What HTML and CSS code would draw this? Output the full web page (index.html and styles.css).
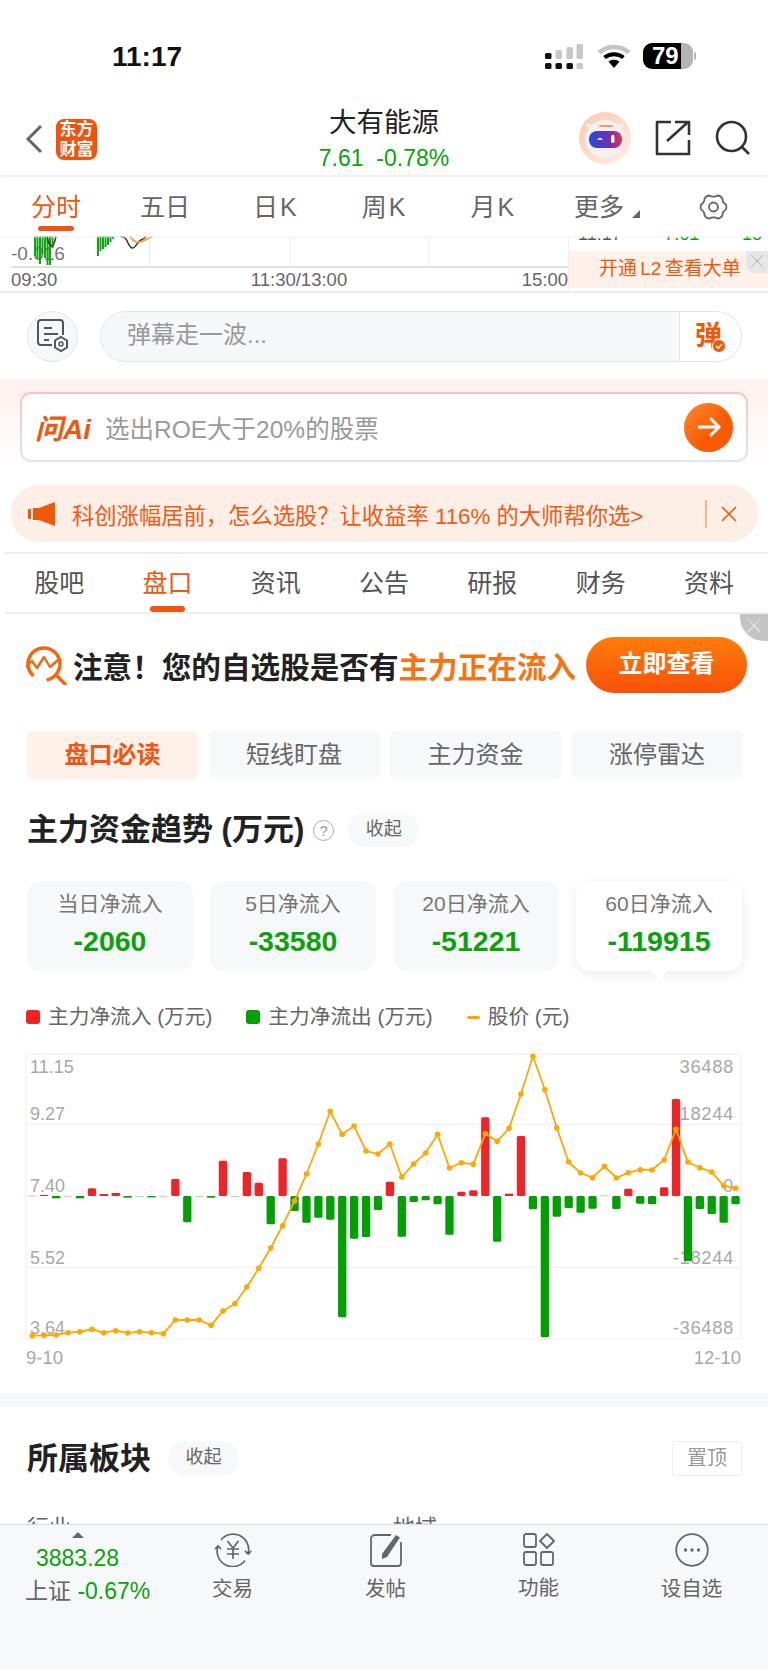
FILE: index.html
```html
<!DOCTYPE html>
<html lang="zh-CN">
<head>
  <meta charset="UTF-8" />
  <title>大有能源</title>
  <link rel="stylesheet" href="styles.css">
</head>
<body>
<div class="page">
  <div class="main">

    <div class="status">
      <span class="clock">11:17</span>
      <div class="status-icons">
        <svg class="signal" width="38" height="25" viewBox="0 0 38 25">
          <rect x="0" y="9" width="6.500" height="6" rx="1.500" fill="#111"/>
          <rect x="10.500" y="6" width="6.500" height="9" rx="1.500" fill="#c8c8c8"/>
          <rect x="21.500" y="3" width="6.500" height="12" rx="1.500" fill="#c8c8c8"/>
          <rect x="31.500" y="0" width="6.500" height="15" rx="1.500" fill="#c8c8c8"/>
          <rect x="0" y="19" width="6.500" height="6" rx="1.500" fill="#111"/>
          <rect x="10.500" y="19" width="6.500" height="6" rx="1.500" fill="#111"/>
          <rect x="21.500" y="19" width="6.500" height="6" rx="1.500" fill="#111"/>
          <rect x="31.500" y="19" width="6.500" height="6" rx="1.500" fill="#c8c8c8"/>
        </svg>
        <svg class="wifi" width="34" height="25" viewBox="0 0 34 25">
          <path d="M2 8.500C10.500 1 23.500 1 32 8.500" fill="none" stroke="#c4c4c4" stroke-width="4.500"/>
          <path d="M7.500 13.500C13 9 21 9 26.500 13.500" fill="none" stroke="#000" stroke-width="4"/>
          <path d="M11.500 17.500C15 15 19 15 22.500 17.500L17 24Z" fill="#000"/>
        </svg>
        <div class="battery"><span>79</span></div>
        <i class="battery-nub"></i>
      </div>
    </div>

    <div class="head">
      <div class="head-left">
        <svg width="18" height="30" viewBox="0 0 18 30"><path d="M16 2L3 15l13 13" fill="none" stroke="#666" stroke-width="3"/></svg>
        <div class="logo">东方<br>财富</div>
      </div>
      <div class="head-title">
        <div class="name">大有能源</div>
        <div class="quote">7.61&nbsp;&nbsp;-0.78%</div>
      </div>
      <div class="head-right">
        <svg width="52" height="52" viewBox="0 0 52 52">
          <defs>
            <linearGradient id="peach" x1="0" y1="0" x2="1" y2="1"><stop offset="0" stop-color="#fdc9ae"/><stop offset="1" stop-color="#fdeee6"/></linearGradient>
            <linearGradient id="visor" x1="0" y1="0" x2="1" y2="0"><stop offset="0" stop-color="#2a4ad8"/><stop offset="0.6" stop-color="#6a2fb5"/><stop offset="1" stop-color="#e8304a"/></linearGradient>
          </defs>
          <circle cx="26" cy="26" r="26" fill="url(#peach)"/>
          <path d="M9 13l6 5M43 13l-6 5" stroke="#f4f0ec" stroke-width="4" stroke-linecap="round"/>
          <ellipse cx="26" cy="27" rx="20" ry="19" fill="#f3f1ef"/>
          <rect x="20" y="13" width="14" height="2" rx="1" fill="#f39a5c"/>
          <rect x="10" y="19" width="33" height="17" rx="8" fill="url(#visor)"/>
          <path d="M19 28c1-2 3-2 4 0" fill="none" stroke="#fff" stroke-width="1.500"/>
          <rect x="32" y="23" width="3.500" height="8" rx="1.700" fill="#fff"/>
        </svg>
        <svg width="36" height="36" viewBox="0 0 36 36"><path d="M16 2H2v32h32V20M12 21L32 3M20 2h14v13" fill="none" stroke="#333" stroke-width="2.600" stroke-linejoin="round"/></svg>
        <svg width="36" height="36" viewBox="0 0 36 36"><circle cx="16.500" cy="16.500" r="14.500" fill="none" stroke="#333" stroke-width="2.600"/><path d="M27 27l7 7" stroke="#333" stroke-width="2.600"/></svg>
      </div>
    </div>

    <div class="periods">
      <span class="period period-on">分时</span>
      <span class="period">五日</span>
      <span class="period period-k">日K</span>
      <span class="period period-k">周K</span>
      <span class="period period-k">月K</span>
      <span class="period more">更多<i class="more-mark"></i></span>
      <svg class="gear" width="29" height="28" viewBox="0 0 29 28">
        <path d="M10.500 2.500c1.500 1.500 6.500 1.500 8 0 1.500 0 4 1.500 5 3-.5 2 1.500 5.500 3.500 6 .5 1.500.5 3.500 0 5-2 .5-4 4-3.500 6-1 1.500-3.500 3-5 3-1.500-1.500-6.500-1.500-8 0-1.500 0-4-1.500-5-3 .5-2-1.500-5.500-3.500-6-.5-1.500-.5-3.500 0-5 2-.5 4-4 3.500-6 1-1.500 3.500-3 5-3z" fill="none" stroke="#666" stroke-width="1.800" stroke-linejoin="round"/>
        <circle cx="14.500" cy="14" r="4.500" fill="none" stroke="#666" stroke-width="1.800"/>
      </svg>
    </div>

    <div class="mini">
      <div class="mini-chart">
        <svg width="557" height="32" viewBox="0 0 557 32">
          <path d="M138.500 0V31M279 0V31M418 0V31" stroke="#e8eaef" stroke-width="1"/>
          <text x="0" y="24" class="mini-label">-0.016</text>
          <path d="M24 0V20M26.500 0V23M29 0V28M31.500 0V18M34 0V22M36.500 0V29M39 0V29M41.500 0V12" stroke="#12a512" stroke-width="2"/>
          <path d="M87 0V20M89.500 0V15M92 0V13M94.500 0V11M97 0V9M99.500 0V6M102 0V3" stroke="#12a512" stroke-width="2"/>
          <path d="M36 0c1 6 3 10 5 10s3-5 4-10" fill="none" stroke="#333" stroke-width="1.500"/>
          <path d="M109 0c3 2 4 0 6 3s3 8 6 9 5-6 9-8 4-2 5-4" fill="none" stroke="#333" stroke-width="1.500"/>
          <path d="M119 0c2 4 6 7 10 6s7-3 13-6" fill="none" stroke="#f5a32a" stroke-width="1.800"/>
          <path d="M0 31H557" stroke="#dfe1e6" stroke-width="2"/>
        </svg>
        <div class="mini-times"><span>09:30</span><span class="mini-noon">11:30/13:00</span><span>15:00</span></div>
      </div>
      <div class="mini-side">
        <div class="mini-tick"><span>11:17</span><span class="up">7.61</span><span class="up">15</span></div>
        <div class="mini-l2">开通 L2 查看大单<span class="l2-close">╳</span></div>
      </div>
    </div>

    <div class="danmu">
      <div class="danmu-btn">
        <svg width="33" height="37" viewBox="0 0 33 37">
          <path d="M16 27H5a3 3 0 0 1-3-3V5a3 3 0 0 1 3-3h19a3 3 0 0 1 3 3v12M8 10h8M8 16h14M8 22h5" fill="none" stroke="#555" stroke-width="2"/>
          <path d="M25 19l6 3.500v7L25 33l-6-3.500v-7z" fill="#f7f8fa" stroke="#555" stroke-width="2"/>
          <circle cx="25" cy="26" r="2" fill="none" stroke="#555" stroke-width="1.500"/>
        </svg>
      </div>
      <div class="danmu-box">
        <span class="danmu-hint">弹幕走一波...</span>
        <span class="danmu-send">弹
          <svg class="danmu-check" width="14" height="14" viewBox="0 0 14 14"><circle cx="7" cy="7" r="6.500" fill="#ee5a0a" stroke="#fff"/><path d="M4 7l2.200 2.200L10 5" fill="none" stroke="#fff" stroke-width="1.400"/></svg>
        </span>
      </div>
    </div>

    <div class="ask-wrap">
      <div class="ask">
        <span class="ask-logo">问Ai</span>
        <span class="ask-text">选出ROE大于20%的股票</span>
        <span class="ask-go">
          <svg width="26" height="24" viewBox="0 0 26 24"><path d="M2 12h21M14 3l9 9-9 9" fill="none" stroke="#fff" stroke-width="3"/></svg>
        </span>
      </div>
      <div class="notice">
        <svg width="28" height="24" viewBox="0 0 28 24"><path d="M0 7h3v10H0zM5 6h6L27 0v24L11 18H5z" fill="#ee5a0a"/></svg>
        <span class="notice-text">科创涨幅居前，怎么选股？让收益率 116% 的大师帮你选&gt;</span>
        <svg class="notice-x" width="32" height="28" viewBox="0 0 32 28"><path d="M1 0V28" stroke="#ee7a3a" stroke-width="1"/><path d="M17 7l14 14M31 7L17 21" stroke="#ee5a0a" stroke-width="1.600"/></svg>
      </div>
    </div>

    <div class="tabs">
      <span class="tab">股吧</span>
      <span class="tab tab-on">盘口</span>
      <span class="tab">资讯</span>
      <span class="tab">公告</span>
      <span class="tab">研报</span>
      <span class="tab">财务</span>
      <span class="tab">资料</span>
    </div>

    <div class="panel">
      <span class="ad-close">╳</span>
      <div class="ad">
        <svg width="43" height="39" viewBox="0 0 43 39">
          <circle cx="20" cy="18" r="16" fill="none" stroke="#f5660f" stroke-width="3.500" stroke-dasharray="78 14" transform="rotate(160 20 18)"/>
          <path d="M32 29l9 9" stroke="#f5660f" stroke-width="3.500" stroke-linecap="round"/>
          <path d="M2 21l6-6 5 7 7-11 6 10 8-7" fill="none" stroke="#f5660f" stroke-width="2.400" stroke-linejoin="round"/>
        </svg>
        <span class="ad-text">注意！您的自选股是否有<em>主力正在流入</em></span>
        <span class="ad-btn">立即查看</span>
      </div>

      <div class="segs">
        <span class="seg seg-on">盘口必读</span>
        <span class="seg">短线盯盘</span>
        <span class="seg">主力资金</span>
        <span class="seg">涨停雷达</span>
      </div>

      <div class="title-row">
        <h2 class="title">主力资金趋势 (万元)</h2>
        <span class="help">?</span>
        <span class="fold">收起</span>
      </div>

      <div class="cards">
        <div class="card"><div class="card-label">当日净流入</div><div class="card-num">-2060</div></div>
        <div class="card"><div class="card-label">5日净流入</div><div class="card-num">-33580</div></div>
        <div class="card"><div class="card-label">20日净流入</div><div class="card-num">-51221</div></div>
        <div class="card card-on"><div class="card-label">60日净流入</div><div class="card-num">-119915</div></div>
      </div>

      <div class="legend">
        <span class="legend-item"><i class="dot dot-red"></i>主力净流入 (万元)</span>
        <span class="legend-item"><i class="dot dot-green"></i>主力净流出 (万元)</span>
        <span class="legend-item"><i class="dash"></i>股价 (元)</span>
      </div>

      <svg id="flow" class="flow" width="768" height="330" viewBox="0 0 768 330"></svg>
    </div>

    <div class="sector">
      <div class="sector-head">
        <h2 class="title">所属板块</h2>
        <span class="fold">收起</span>
        <span class="pin">置顶</span>
      </div>
      <div class="sector-cols"><span>行业</span><span>地域</span></div>
    </div>
  </div>

  <div class="bar">
    <div class="bar-index">
      <i class="bar-arrow"></i>
      <div class="bar-price">3883.28</div>
      <div class="bar-rate">上证 <b>-0.67%</b></div>
    </div>
    <div class="bar-item">
      <svg width="38" height="34" viewBox="0 0 38 34">
        <path d="M7 7A15.500 15.500 0 0 1 34.300 20M31 18l3.300 3 3-3M31 27.500A15.500 15.500 0 0 1 3.700 14M1 16l3-3 3 3" fill="none" stroke="#666" stroke-width="1.700"/>
        <path d="M13.500 8l5.500 7 5.500-7M13 16h12M13 21h12M19 15v11" fill="none" stroke="#666" stroke-width="1.700"/>
      </svg>
      <span>交易</span>
    </div>
    <div class="bar-item">
      <svg width="34" height="34" viewBox="0 0 34 34">
        <path d="M22 2H6a4 4 0 0 0-4 4v24a3 3 0 0 0 3 3h24a3 3 0 0 0 3-3V9" fill="none" stroke="#666" stroke-width="1.800"/>
        <path d="M13 21L27 2l4 2.500L18 24l-5 2z" fill="#666"/>
      </svg>
      <span>发帖</span>
    </div>
    <div class="bar-item">
      <svg width="32" height="33" viewBox="0 0 32 33">
        <rect x="1" y="1" width="12" height="13" rx="2" fill="none" stroke="#666" stroke-width="1.800"/>
        <path d="M24 1l7 7-7 7-7-7z" fill="none" stroke="#666" stroke-width="1.800" stroke-linejoin="round"/>
        <rect x="1" y="19" width="12" height="13" rx="2" fill="none" stroke="#666" stroke-width="1.800"/>
        <rect x="18" y="19" width="12" height="13" rx="2" fill="none" stroke="#666" stroke-width="1.800"/>
      </svg>
      <span>功能</span>
    </div>
    <div class="bar-item">
      <svg width="34" height="34" viewBox="0 0 34 34">
        <circle cx="17" cy="17" r="15.800" fill="none" stroke="#666" stroke-width="1.800"/>
        <circle cx="10.500" cy="17" r="1.700" fill="#666"/><circle cx="17" cy="17" r="1.700" fill="#666"/><circle cx="23.500" cy="17" r="1.700" fill="#666"/>
      </svg>
      <span>设自选</span>
    </div>
  </div>
</div>
<script src="chart.js"></script>
</body>
</html>
```

FILE: styles.css
```css
* {
  box-sizing: border-box;
}
body {
  margin: 0;
  background: #fff;
  font-family: "Liberation Sans", "Noto Sans CJK SC", sans-serif;
  color: #333;
}
i {
  display: block;
}
.page {
  width: 768px;
  height: 1669px;
  display: flex;
  flex-direction: column;
  overflow: hidden;
}
.main {
  flex: 1;
  min-height: 0;
  overflow: hidden;
}

/* status bar */
.status {
  height: 100px;
  padding: 41px 72px 0 112px;
  display: flex;
  justify-content: space-between;
  align-items: flex-start;
}
.clock {
  font-size: 28px;
  line-height: 32px;
  font-weight: 700;
  color: #111;
}
.status-icons {
  display: flex;
  align-items: center;
  margin-top: 2px;
}
.wifi {
  margin-left: 14px;
}
.battery {
  margin-left: 12px;
  width: 50px;
  height: 26px;
  border-radius: 9px;
  background: linear-gradient(90deg, #000 76%, #b4b4b4 76%);
  color: #fff;
  font-size: 24px;
  line-height: 26px;
  font-weight: 700;
  padding-left: 9px;
}
.battery-nub {
  width: 2px;
  height: 8px;
  margin-left: 1px;
  background: #b4b4b4;
  border-radius: 0 2px 2px 0;
}

/* stock header */
.head {
  height: 77px;
  display: grid;
  grid-template-columns: 1fr auto 1fr;
  align-items: center;
  border-bottom: 2px solid #f0f0f0;
}
.head-left {
  display: flex;
  align-items: center;
  padding-left: 25px;
  gap: 13px;
  padding-top: 3px;
}
.logo {
  width: 41px;
  height: 41px;
  border-radius: 8px;
  background: #f4520a;
  color: #fff;
  font-size: 17px;
  line-height: 20px;
  font-weight: 700;
  text-align: center;
  padding-top: 1px;
}
.head-title {
  text-align: center;
  margin-top: 3px;
}
.name {
  font-size: 27.500px;
  line-height: 38px;
  color: #222;
}
.quote {
  font-size: 23px;
  line-height: 32px;
  color: #0aa30a;
}
.head-right {
  display: flex;
  justify-content: flex-end;
  align-items: center;
  padding-right: 17px;
  gap: 24px;
}

/* chart period tabs */
.periods {
  height: 59px;
  display: flex;
  align-items: center;
  padding-left: 31px;
  gap: 59px;
  box-shadow: 0 1px 2px #f2f2f2;
  position: relative;
}
.period {
  font-size: 25px;
  color: #666;
  line-height: 58px;
  position: relative;
}
.period-k {
  letter-spacing: 2px;
  margin-left: 4px;
}
.period-on {
  color: #f0560f;
}
.period-on::after {
  content: "";
  position: absolute;
  left: 7px;
  right: 7px;
  bottom: 5px;
  height: 5px;
  border-radius: 3px;
  background: #f0560f;
}
.more {
  display: flex;
  margin-left: -1px;
}
.more-mark {
  align-self: center;
  margin: 14px 0 0 8px;
  border-left: 8px solid transparent;
  border-bottom: 8px solid #666;
}
.gear {
  margin-left: 0;
}

/* cropped intraday chart */
.mini {
  height: 57px;
  display: flex;
  border-bottom: 2px solid #eceef1;
}
.mini-chart {
  width: 568px;
  padding-left: 11px;
}
.mini-chart svg {
  display: block;
}
.mini-label {
  font-size: 19px;
  fill: #777;
}
.mini-times {
  display: flex;
  justify-content: space-between;
  font-size: 18.500px;
  line-height: 23px;
  color: #666;
}
.mini-noon {
  margin-left: 19px;
}
.mini-side {
  flex: 1;
  border-left: 1px solid #eceef1;
}
.mini-tick {
  height: 15px;
  overflow: hidden;
  display: flex;
  justify-content: space-between;
  padding: 0 6px 0 9px;
  font-size: 18px;
  line-height: 0;
  color: #555;
}
.mini-tick span {
  margin-top: -2px;
}
.up {
  color: #0aa30a;
}
.mini-l2 {
  height: 37px;
  background: #fdf1ea;
  color: #f0580f;
  font-size: 19px;
  line-height: 36px;
  padding-left: 30px;
  word-spacing: -2px;
  position: relative;
}
.l2-close {
  position: absolute;
  right: 0;
  top: 0;
  width: 22px;
  height: 22px;
  background: #e7e7e7;
  border-radius: 0 0 0 8px;
  color: #888;
  font-size: 12px;
  line-height: 22px;
  text-align: center;
}

/* comment input */
.danmu {
  height: 86px;
  display: flex;
  align-items: center;
  padding-left: 27px;
  gap: 22px;
}
.danmu-btn {
  width: 51px;
  height: 51px;
  border-radius: 50%;
  border: 1px solid #e2e4e8;
  background: #f7f8fa;
  display: flex;
  align-items: center;
  justify-content: center;
}
.danmu-box {
  width: 642px;
  height: 51px;
  border: 1px solid #e2e4e8;
  border-radius: 26px;
  background: linear-gradient(90deg, #f6f7f9 579px, #fff 579px);
  display: flex;
  align-items: center;
  justify-content: space-between;
  overflow: hidden;
}
.danmu-hint {
  padding: 0 0 7px 26px;
  font-size: 24px;
  color: #999;
}
.danmu-send {
  width: 62px;
  height: 100%;
  border-left: 1px solid #e2e4e8;
  color: #ee5a0a;
  font-size: 27px;
  line-height: 49px;
  font-weight: 700;
  padding-left: 15px;
  position: relative;
}
.danmu-check {
  position: absolute;
  left: 32px;
  top: 27px;
}

/* AI prompt and notice */
.ask-wrap {
  padding: 13px 10px 10px 11px;
  background: linear-gradient(#fff1ee, #fff 90px);
}
.ask {
  margin: 0 10px 0 9px;
  height: 70px;
  border-radius: 11px;
  border: 2px solid transparent;
  background: linear-gradient(#fff, #fff) padding-box, linear-gradient(#fdc4ba, #dfe4f6) border-box;
  display: flex;
  align-items: center;
  padding-left: 13px;
}
.ask-logo {
  width: 70px;
  color: #f0560f;
  font-size: 28px;
  font-weight: 700;
  font-style: italic;
}
.ask-text {
  flex: 1;
  font-size: 24.500px;
  color: #999;
}
.ask-go {
  width: 49px;
  height: 49px;
  margin-right: 13px;
  border-radius: 50%;
  background: linear-gradient(135deg, #ff8a2a, #fb5a05 60%);
  display: flex;
  align-items: center;
  justify-content: center;
}
.notice {
  margin-top: 23px;
  height: 57px;
  border-radius: 28px;
  background: #fdeee6;
  display: flex;
  align-items: center;
  padding: 0 21px 0 17px;
}
.notice-text {
  flex: 1;
  padding-left: 16px;
  font-size: 22.300px;
  color: #ee5a17;
  white-space: nowrap;
}

/* section tabs */
.tabs {
  height: 62px;
  margin-left: 5px;
  display: grid;
  grid-template-columns: repeat(7, 108.300px);
  border-top: 2px solid #eeeeee;
  border-bottom: 2px solid #eeeeee;
}
.tab {
  text-align: center;
  font-size: 25px;
  line-height: 58px;
  color: #555;
  position: relative;
}
.tab-on {
  color: #f0560f;
}
.tab-on::after {
  content: "";
  position: absolute;
  left: 37px;
  width: 35px;
  bottom: 0;
  height: 6px;
  border-radius: 3px;
  background: #f0560f;
}

/* capital flow panel */
.panel {
  position: relative;
  padding-top: 23px;
}
.ad-close {
  position: absolute;
  right: 0;
  top: 0;
  width: 28px;
  height: 27px;
  border-radius: 0 0 0 24px;
  background: #c4c4c4;
  color: #fff;
  font-size: 13px;
  line-height: 24px;
  text-align: center;
}
.ad {
  height: 56px;
  display: flex;
  align-items: center;
  padding: 0 21px 0 24px;
}
.ad-text {
  flex: 1;
  padding-left: 6px;
  font-size: 29.600px;
  font-weight: 700;
  color: #222;
  white-space: nowrap;
}
.ad-text em {
  font-style: normal;
  color: #f8720f;
}
.ad-btn {
  flex: none;
  width: 161px;
  height: 56px;
  border-radius: 28px;
  background: linear-gradient(#ff7d08, #f9500a);
  color: #fff;
  font-size: 24px;
  line-height: 54px;
  font-weight: 700;
  text-align: center;
}
.segs {
  margin-top: 38px;
  padding: 0 26px 0 27px;
  display: grid;
  grid-template-columns: repeat(4, 171px);
  gap: 10.500px;
}
.seg {
  height: 48px;
  border-radius: 6px;
  background: #f7f8fa;
  color: #666;
  font-size: 24px;
  line-height: 47px;
  text-align: center;
}
.seg-on {
  background: #fff0e8;
  color: #f0560f;
  font-weight: 700;
}
.title-row {
  margin-top: 34px;
  padding-left: 27px;
  height: 34px;
  display: flex;
  align-items: center;
}
.title {
  margin: 0;
  font-size: 31px;
  font-weight: 700;
  color: #222;
  line-height: 34px;
}
.help {
  margin-left: 9px;
  width: 21px;
  height: 21px;
  border: 1px solid #aaa;
  border-radius: 50%;
  color: #999;
  font-size: 15px;
  line-height: 19px;
  text-align: center;
}
.fold {
  margin-left: 14px;
  width: 71px;
  height: 34px;
  border-radius: 17px;
  background: #f7f8fa;
  color: #666;
  font-size: 18px;
  line-height: 33px;
  text-align: center;
}
.cards {
  margin-top: 34px;
  padding-left: 27px;
  display: grid;
  grid-template-columns: repeat(4, 166px);
  gap: 17px;
}
.card {
  height: 90px;
  border-radius: 14px;
  background: #f7f8fa;
  text-align: center;
  padding-top: 8px;
  position: relative;
}
.card-label {
  font-size: 21px;
  line-height: 30px;
  color: #777;
}
.card-num {
  margin-top: 6px;
  font-size: 28.500px;
  line-height: 32px;
  font-weight: 700;
  color: #0aa30a;
}
.card-on {
  background: #fff;
  box-shadow: 0 3px 12px rgba(0, 0, 0, 0.08);
}
.card-on::after {
  content: "";
  position: absolute;
  left: 75px;
  bottom: -8px;
  border-left: 8px solid transparent;
  border-right: 8px solid transparent;
  border-top: 8px solid #fff;
}
.legend {
  margin-top: 36px;
  padding-left: 26px;
  height: 20px;
  display: flex;
  gap: 34px;
  font-size: 20.700px;
  line-height: 20px;
  color: #666;
}
.legend-item {
  display: flex;
  align-items: center;
}
.dot {
  width: 14px;
  height: 14px;
  border-radius: 3px;
  margin-right: 8px;
}
.dot-red {
  background: #f52225;
}
.dot-green {
  background: #00a000;
}
.dash {
  width: 13px;
  height: 3px;
  border-radius: 2px;
  background: #ffa800;
  margin-right: 8px;
}
.flow {
  display: block;
  margin-top: 13px;
}
.flow text {
  font-size: 18.500px;
  fill: #a8a8a8;
}
.flow .axis-l {
  font-size: 18px;
}
.flow .axis-r {
  letter-spacing: 0.600px;
}

/* sector block, cut off by the bottom bar */
.sector {
  margin-top: 23px;
  border-top: 14px solid #f7f8fa;
  padding: 34px 26px 0 27px;
}
.sector-head {
  height: 35px;
  display: flex;
  align-items: center;
}
.sector-head .fold {
  margin-left: 17px;
  height: 35px;
}
.pin {
  margin-left: auto;
  width: 70px;
  height: 35px;
  border: 1px solid #eeeeee;
  border-radius: 3px;
  color: #999;
  font-size: 20px;
  line-height: 33px;
  text-align: center;
}
.sector-cols {
  margin-top: 33px;
  display: grid;
  grid-template-columns: 366px 1fr;
  font-size: 22px;
  color: #666;
}

/* bottom bar */
.bar {
  height: 145px;
  border-top: 1px solid #dddddd;
  background: #f7f8fa;
  display: flex;
  align-items: flex-start;
  padding-top: 8px;
}
.bar-index {
  width: 156px;
  padding-left: 25px;
  position: relative;
  flex: none;
}
.bar-arrow {
  position: absolute;
  left: 72px;
  top: -1px;
  border-left: 6px solid transparent;
  border-right: 6px solid transparent;
  border-bottom: 6px solid #666;
}
.bar-price {
  margin-top: 12px;
  padding-left: 11px;
  font-size: 23px;
  line-height: 26px;
  color: #0aa30a;
}
.bar-rate {
  margin-top: 5px;
  font-size: 23px;
  line-height: 30px;
  color: #666;
  white-space: nowrap;
}
.bar-rate b {
  font-weight: 400;
  color: #0aa30a;
}
.bar-item {
  width: 153px;
  flex: none;
  text-align: center;
  font-size: 20.500px;
  line-height: 28px;
  color: #666;
}
.bar-item svg {
  display: block;
  margin: 0 auto 8px;
}
```

FILE: chart.js
```js
// 60 day capital flow: bars around the zero line plus the price line.
// Values are pixel rows inside the plot, three to the unit.
var price = [887,886,885,878,875,868,878,872,879,875,878,881,840,840,840,856,813,791,741,685,
  624,557,483,402,312,214,283,258,333,342,312,411,372,339,283,384,368,373,281,304,
  265,162,49,149,264,366,399,413,379,414,398,389,390,360,268,366,383,396,437,445];
var flow = [467,465,475,467,475,445,462,459,473,469,472,467,417,547,469,473,362,469,396,428,
  553,355,513,548,533,539,832,596,591,510,425,590,486,481,493,584,455,451,232,605,
  461,288,508,892,530,504,518,506,466,507,446,491,493,442,177,663,507,522,548,493];
var ZERO = 468;
var svg = document.getElementById("flow");
var html = "";

function posX(i) {
  return 32.3 + 11.92 * i;
}

// frame and grid lines
html += '<path d="M26 14H741M26 84.300H741M26 227.300H741M26 299H741M26 14V299M741 14V299" stroke="#efefef" stroke-width="1" fill="none"/>';

// left axis is price, right axis is money
var left = [["11.15", 33], ["9.27", 80], ["7.40", 152], ["5.52", 224], ["3.64", 294]];
var right = [["36488", 33], ["18244", 80], ["0", 152], ["-18244", 224], ["-36488", 294]];
left.forEach(function (t) {
  html += '<text class="axis-l" x="30" y="' + t[1] + '">' + t[0] + "</text>";
});
right.forEach(function (t) {
  html += '<text class="axis-r" x="734" y="' + t[1] + '" text-anchor="end">' + t[0] + "</text>";
});
html += '<text x="26" y="324">9-10</text>';
html += '<text x="741" y="324" text-anchor="end">12-10</text>';

flow.forEach(function (v, i) {
  var isUp = v < ZERO;
  var top = isUp ? v / 3 : ZERO / 3;
  var h = Math.abs(v - ZERO) / 3;
  var color = isUp ? "#f52225" : "#00a000";
  var pale = h < 1;
  if (pale) {
    h = 1;
  }
  html += '<rect x="' + (posX(i) - 4.15) + '" y="' + top + '" width="8.3" height="' + h + '" rx="' + (h > 3 ? 1.5 : 0) + '" fill="' + color + '"' + (pale ? ' opacity="0.35"' : "") + "/>";
});

var pts = price.map(function (v, i) {
  return posX(i).toFixed(1) + "," + (v / 3).toFixed(1);
});
html += '<polyline points="' + pts.join(" ") + '" fill="none" stroke="#ffa800" stroke-width="1.8"/>';
pts.forEach(function (p) {
  var xy = p.split(",");
  html += '<circle cx="' + xy[0] + '" cy="' + xy[1] + '" r="2.8" fill="#ffa800"/>';
});

svg.innerHTML = html;
```
